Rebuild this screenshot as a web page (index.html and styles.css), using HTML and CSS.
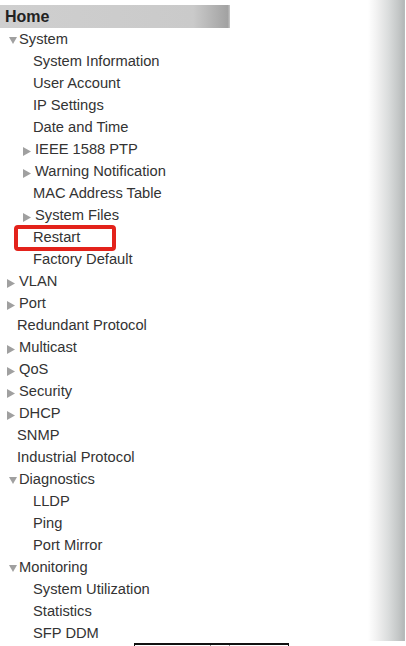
FILE: index.html
```html
<!DOCTYPE html>
<html>
<head>
<meta charset="utf-8">
<link rel="stylesheet" href="styles.css">
</head>
<body>
<div class="page">
  <div class="menu">
    <div class="home">Home</div>
    <ul class="tree">
      <li class="row l1"><span class="tw down"><svg width="8" height="7" viewBox="0 0 8 7"><path d="M0 0H8L4 7Z"/></svg></span>System</li>
      <li class="row l2 leaf">System Information</li>
      <li class="row l2 leaf">User Account</li>
      <li class="row l2 leaf">IP Settings</li>
      <li class="row l2 leaf">Date and Time</li>
      <li class="row l2"><span class="tw right"><svg width="8" height="9" viewBox="0 0 8 9"><path d="M0 0L8 4.5L0 9Z"/></svg></span>IEEE 1588 PTP</li>
      <li class="row l2"><span class="tw right"><svg width="8" height="9" viewBox="0 0 8 9"><path d="M0 0L8 4.5L0 9Z"/></svg></span>Warning Notification</li>
      <li class="row l2 leaf">MAC Address Table</li>
      <li class="row l2"><span class="tw right"><svg width="8" height="9" viewBox="0 0 8 9"><path d="M0 0L8 4.5L0 9Z"/></svg></span>System Files</li>
      <li class="row l2 leaf marked">Restart<span class="mark"></span></li>
      <li class="row l2 leaf">Factory Default</li>
      <li class="row l1"><span class="tw right"><svg width="8" height="9" viewBox="0 0 8 9"><path d="M0 0L8 4.5L0 9Z"/></svg></span>VLAN</li>
      <li class="row l1"><span class="tw right"><svg width="8" height="9" viewBox="0 0 8 9"><path d="M0 0L8 4.5L0 9Z"/></svg></span>Port</li>
      <li class="row l1 leaf">Redundant Protocol</li>
      <li class="row l1"><span class="tw right"><svg width="8" height="9" viewBox="0 0 8 9"><path d="M0 0L8 4.5L0 9Z"/></svg></span>Multicast</li>
      <li class="row l1"><span class="tw right"><svg width="8" height="9" viewBox="0 0 8 9"><path d="M0 0L8 4.5L0 9Z"/></svg></span>QoS</li>
      <li class="row l1"><span class="tw right"><svg width="8" height="9" viewBox="0 0 8 9"><path d="M0 0L8 4.5L0 9Z"/></svg></span>Security</li>
      <li class="row l1"><span class="tw right"><svg width="8" height="9" viewBox="0 0 8 9"><path d="M0 0L8 4.5L0 9Z"/></svg></span>DHCP</li>
      <li class="row l1 leaf">SNMP</li>
      <li class="row l1 leaf">Industrial Protocol</li>
      <li class="row l1"><span class="tw down"><svg width="8" height="7" viewBox="0 0 8 7"><path d="M0 0H8L4 7Z"/></svg></span>Diagnostics</li>
      <li class="row l2 leaf">LLDP</li>
      <li class="row l2 leaf">Ping</li>
      <li class="row l2 leaf">Port Mirror</li>
      <li class="row l1"><span class="tw down"><svg width="8" height="7" viewBox="0 0 8 7"><path d="M0 0H8L4 7Z"/></svg></span>Monitoring</li>
      <li class="row l2 leaf">System Utilization</li>
      <li class="row l2 leaf">Statistics</li>
      <li class="row l2 leaf">SFP DDM</li>
    </ul>
    <div class="tbl"><span class="cell c1"></span><span class="cell c2"></span><span class="cell c3"></span></div>
  </div>
  <div class="shade"></div>
</div>
</body>
</html>
```

FILE: styles.css
```css
html, body {
  margin: 0;
  padding: 0;
  background: #fff;
  overflow: hidden;
}
body {
  font-family: "Liberation Sans", Arial, sans-serif;
  color: #333;
}
.page {
  display: flex;
  width: 406px;
  height: 646px;
}
.menu {
  width: 368px;
  padding-top: 5px;
  flex: none;
}
.home {
  width: 230px;
  height: 23px;
  box-sizing: border-box;
  padding-left: 5px;
  font-size: 16px;
  font-weight: bold;
  line-height: 23px;
  color: #222;
  background: linear-gradient(to right, #cfcfcf 0%, #cacaca 84%, #a2a2a2 99%, #c8c8c8 100%);
}
.tree {
  list-style: none;
  margin: 0;
  padding: 0;
}
.row {
  height: 22px;
  line-height: 22px;
  font-size: 14.7px;
  display: flex;
  align-items: center;
  white-space: nowrap;
}
.l1 { padding-left: 7px; }
.l2 { padding-left: 23px; }
.l1.leaf { padding-left: 17px; }
.l2.leaf { padding-left: 33px; }
.tw {
  display: inline-flex;
  width: 12px;
  flex: none;
  fill: #a0a0a0;
}
.tw.down { padding-left: 2px; width: 10px; margin-top: 2px; }
.tw.right { margin-top: 4px; }
.marked { position: relative; }
.mark {
  position: absolute;
  left: 14px;
  top: -1px;
  width: 102px;
  height: 26px;
  box-sizing: border-box;
  border: 4px solid #e3221b;
  border-radius: 4px;
}
.tbl {
  display: flex;
  margin-left: 134px;
  margin-top: -1px;
  width: 155px;
  height: 8px;
  box-sizing: border-box;
  border-top: 2px solid #111;
  border-left: 1.5px solid #111;
  border-right: 1.5px solid #111;
}
.cell { height: 100%; }
.c1 { width: 75px; border-right: 1px solid #888; }
.c2 { width: 18px; border-right: 1px solid #888; }
.shade {
  width: 38px;
  height: 641px;
  flex: none;
  background: linear-gradient(to right, #ffffff 0%, #f2f2f2 22%, #dcdede 52%, #c4c7c7 80%, #b3b7b7 96%, #ffffff 97%);
}
```
